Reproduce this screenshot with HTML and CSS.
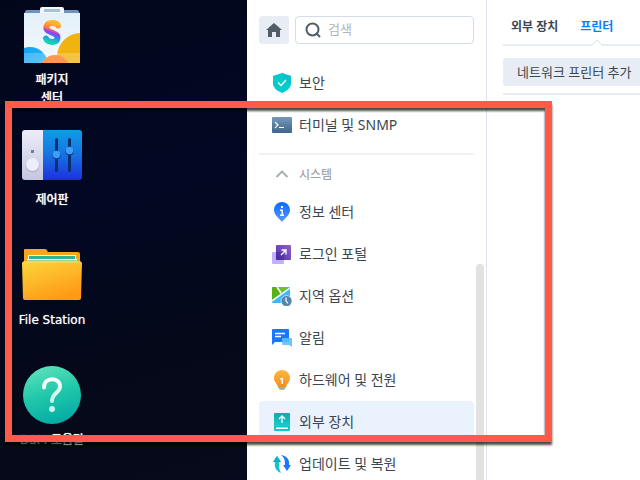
FILE: index.html
```
<!DOCTYPE html>
<html lang="ko">
<head>
  <meta charset="UTF-8">
  <meta name="viewport" content="width=device-width, initial-scale=1.0">
  <title>제어판</title>
  <link rel="stylesheet" href="styles.css">
</head>
<body>
  <div class="screen">
    <nav class="desktop">
      <a class="shortcut" href="#package">
        <svg class="shortcut-icon" viewBox="0 0 60 60">
          <defs>
            <linearGradient id="bag" x1="0" y1="0" x2="0" y2="1"><stop offset="0" stop-color="#e4f0f9"/><stop offset="1" stop-color="#f4f9fd"/></linearGradient>
            <linearGradient id="bagBlue" x1="0" y1="0" x2="1" y2="1"><stop offset="0" stop-color="#0a9df2"/><stop offset="1" stop-color="#3cc0fa"/></linearGradient>
            <linearGradient id="bagS" x1=".6" y1="0" x2=".4" y2="1"><stop offset="0" stop-color="#ffb52e"/><stop offset=".32" stop-color="#ff7a3c"/><stop offset=".5" stop-color="#a03cf0"/><stop offset=".7" stop-color="#2f86f5"/><stop offset="1" stop-color="#12d3b5"/></linearGradient>
            <clipPath id="bagClip"><rect x="2" y="7" width="56" height="51" rx="1"/></clipPath>
          </defs>
          <path d="M4 5h52l2 4H2z" fill="#6e93b8"/>
          <g clip-path="url(#bagClip)">
            <rect x="2" y="8" width="56" height="50" fill="url(#bag)"/>
            <circle cx="8" cy="60" r="18" fill="url(#bagBlue)"/>
            <circle cx="59" cy="52" r="24" fill="#f0b310"/>
            <circle cx="33" cy="65" r="15" fill="#ff7a20"/>
            <rect x="2" y="48" width="56" height="10" fill="#fff" opacity=".22"/>
          </g>
          <path d="M18 8V4q0-2 2-2h20q2 0 2 2v4z" fill="#f3f8fc"/>
          <path d="M22 4h16v3H22z" fill="#a9c0d6"/>
          <path d="M36 20.500C35 18 32.500 18 30 18C23.500 18 22.500 25 27.500 26.500L32 28.500C37.500 30.500 36 37 30.500 37C27 37 25 36 24 33.500" fill="none" stroke="url(#bagS)" stroke-width="6" stroke-linecap="round"/>
        </svg>
        <span class="shortcut-label">패키지<br>센터</span>
      </a>
      <a class="shortcut" href="#control">
        <svg class="shortcut-icon" viewBox="0 0 60 60">
          <defs>
            <linearGradient id="cpLeft" x1="0" y1="0" x2="0" y2="1"><stop offset="0" stop-color="#ececfa"/><stop offset="1" stop-color="#c5c6df"/></linearGradient>
            <linearGradient id="cpRight" x1="0" y1="0" x2="0" y2="1"><stop offset="0" stop-color="#109be8"/><stop offset=".5" stop-color="#1673e0"/><stop offset="1" stop-color="#1d2fe0"/></linearGradient>
          </defs>
          <path d="M3 5h18v50H3q-3 0-3-3V8q0-3 3-3z" fill="url(#cpLeft)"/>
          <path d="M21 5h36q3 0 3 3v44q0 3-3 3H21z" fill="url(#cpRight)"/>
          <rect x="9" y="25" width="3" height="3" fill="#777a9b"/>
          <circle cx="10.500" cy="40.500" r="7" fill="#a4a5c4" opacity=".6"/>
          <circle cx="10.500" cy="39.500" r="6.500" fill="#eeeefa"/>
          <path d="M34.500 14.500v31M47.500 14.500v31" stroke="#08306f" stroke-width="3" stroke-linecap="round"/>
          <circle cx="34.500" cy="30.500" r="4" fill="#0b3d92"/>
          <circle cx="47.500" cy="26.500" r="4" fill="#0b3d92"/>
          <circle cx="34.500" cy="29.500" r="3.700" fill="#3d9dff"/>
          <circle cx="47.500" cy="25.500" r="3.700" fill="#3d9dff"/>
        </svg>
        <span class="shortcut-label">제어판</span>
      </a>
      <a class="shortcut" href="#files">
        <svg class="shortcut-icon" viewBox="0 0 60 60">
          <defs>
            <linearGradient id="folder" x1="0" y1="0" x2=".5" y2="1"><stop offset="0" stop-color="#fdd53a"/><stop offset=".5" stop-color="#fdb929"/><stop offset="1" stop-color="#ff9a17"/></linearGradient>
          </defs>
          <path d="M3 4h20q2 0 3 3h30q2 0 2 2v12H2V5q0-1 1-1z" fill="#f5a51f"/>
          <path d="M6 10h48v9H6z" fill="#e9f7f0"/>
          <path d="M7 11h46v7H7z" fill="#2fb592"/>
          <path d="M5 14h50v5H5z" fill="#9bd69a"/>
          <path d="M5 14h50v1H5z" fill="#f2fbf4"/>
          <path d="M1 17h58q1 0 1 1l-1 35q0 2-2 2H3q-2 0-2-2L0 18q0-1 1-1z" fill="url(#folder)"/>
          <path d="M1 17h58" stroke="#ffe36b"/>
        </svg>
        <span class="shortcut-label">File Station</span>
      </a>
      <a class="shortcut" href="#help">
        <svg class="shortcut-icon" viewBox="0 0 60 60">
          <defs>
            <linearGradient id="help" x1=".2" y1="0" x2=".5" y2="1"><stop offset="0" stop-color="#5ee3bd"/><stop offset=".5" stop-color="#22c8aa"/><stop offset="1" stop-color="#04aca5"/></linearGradient>
            <linearGradient id="helpMark" x1="0" y1="0" x2="0" y2="1"><stop offset="0" stop-color="#fff"/><stop offset="1" stop-color="#c4f2e9"/></linearGradient>
          </defs>
          <circle cx="30" cy="30" r="29" fill="url(#help)"/>
          <path d="M22 22.500C22 11 38 12 38 21.500C38 28 30 27.500 30 36" fill="none" stroke="url(#helpMark)" stroke-width="4" stroke-linecap="round"/>
          <circle cx="30" cy="44" r="3" fill="#c9f4ec"/>
        </svg>
        <span class="shortcut-label">DSM 도움말</span>
      </a>
    </nav>

    <main class="window">
      <aside class="sidebar">
        <div class="search-row">
          <button class="home-btn" type="button" aria-label="홈">
            <svg width="18" height="16" viewBox="0 0 18 16"><path d="M9 1l8 7h-2v7h-4v-5H7v5H3V8H1z" fill="#505d66"/></svg>
          </button>
          <label class="search-box">
            <svg width="16" height="16" viewBox="0 0 16 16" fill="none" stroke="#505d66" stroke-width="2"><circle cx="7.500" cy="7.500" r="6"/><path d="M11 11l4 4"/></svg>
            <input type="text" placeholder="검색" aria-label="검색">
          </label>
        </div>

        <div class="menu">
          <a class="menu-item" href="#security">
            <svg class="menu-icon" viewBox="0 0 20 20"><path d="M10 0L19 3v8q0 5-9 9Q1 16 1 11V3z" fill="#00cdcb"/><path d="M10 0L19 3v8L10 6z" fill="#12b9cd" opacity=".6"/><path d="M6 9.500l3 3 5-5.500" fill="none" stroke="#fff" stroke-width="1.500"/></svg>
            <span class="menu-text">보안</span>
          </a>
          <a class="menu-item" href="#terminal">
            <svg class="menu-icon" viewBox="0 0 20 20"><defs><linearGradient id="term" x1="0" y1="0" x2="0" y2="1"><stop offset="0" stop-color="#7699bd"/><stop offset="1" stop-color="#3f6489"/></linearGradient></defs><rect y="2" width="20" height="16" rx="1" fill="url(#term)"/><path d="M3 7l3 3-3 3M7 12.500h5" fill="none" stroke="#fff" stroke-width="1.200"/></svg>
            <span class="menu-text">터미널 및 SNMP</span>
          </a>
          <button class="menu-group" type="button">
            <svg class="menu-icon" viewBox="0 0 20 20"><path d="M4.500 13L10 7.500l5.500 5.500" fill="none" stroke="#a5aaae" stroke-width="1.800"/></svg>
            <span>시스템</span>
          </button>
          <a class="menu-item" href="#info">
            <svg class="menu-icon" viewBox="0 0 20 20"><defs><linearGradient id="info" x1="0" y1="0" x2="0" y2="1"><stop offset="0" stop-color="#0b6bff"/><stop offset="1" stop-color="#5b96ff"/></linearGradient></defs><path d="M10 0c5 0 8 4 8 8 0 5-5 8-8 12-3-4-8-7-8-12 0-4 3-8 8-8z" fill="url(#info)"/><path d="M9 4h2v2H9zM8 7.500h3v5h1v1.500H8v-1.500h1.500V9H8z" fill="#fff"/></svg>
            <span class="menu-text">정보 센터</span>
          </a>
          <a class="menu-item" href="#portal">
            <svg class="menu-icon" viewBox="0 0 20 20"><defs><linearGradient id="portal" x1="0" y1="1" x2="1" y2="0"><stop offset="0" stop-color="#4a2fa4"/><stop offset="1" stop-color="#9462cf"/></linearGradient></defs><rect y="8" width="12" height="12" rx="1" fill="#c3adff"/><rect x="4" y="1" width="15" height="15" rx="1" fill="url(#portal)"/><path d="M4 8h8v8H4z" fill="#40258f" opacity=".4"/><path d="M9 11l5-5M9.500 6H14v4.500" fill="none" stroke="#fff" stroke-width="1.300"/></svg>
            <span class="menu-text">로그인 포털</span>
          </a>
          <a class="menu-item" href="#region">
            <svg class="menu-icon" viewBox="0 0 20 20"><rect y="1" width="18" height="16" rx="1" fill="#43b5fc"/><path d="M0 2q0-1 1-1h16L0 14z" fill="#6bc51c"/><path d="M0 14L8 7 5 1H1Q0 1 0 2z" fill="#58b215"/><path d="M0 15L18 2M5 1l4 6" stroke="#fff" stroke-width="1.500"/><circle cx="14.500" cy="15" r="5.500" fill="#5284b4" stroke="#fff" stroke-width=".6"/><path d="M14 11.500V15l2 2.500" fill="none" stroke="#fff" stroke-width="1.200"/></svg>
            <span class="menu-text">지역 옵션</span>
          </a>
          <a class="menu-item" href="#notify">
            <svg class="menu-icon" viewBox="0 0 20 20"><path d="M1 1h15q1 0 1 1v12H3l-3 3V2q0-1 1-1z" fill="#1877ff"/><path d="M3 5.500h10M3 8.500h6" stroke="#fff" stroke-width="1.300"/><path d="M11 10h8q1 0 1 1v8l-3-2h-6q-1 0-1-1v-5q0-1 1-1z" fill="#5bc0ff" opacity=".9"/></svg>
            <span class="menu-text">알림</span>
          </a>
          <a class="menu-item" href="#power">
            <svg class="menu-icon" viewBox="0 0 20 20"><defs><linearGradient id="bulb" x1="0" y1="0" x2="0" y2="1"><stop offset="0" stop-color="#ffb83f"/><stop offset="1" stop-color="#f78c20"/></linearGradient></defs><path d="M10 0c5 0 8 4 8 8 0 4-3 5-4 9H6c-1-4-4-5-4-9 0-4 3-8 8-8z" fill="url(#bulb)"/><path d="M6 17h8l-1 2q-3 2-6 0z" fill="#9babb8"/><path d="M8 8.500l2-.8h1V14H9.500V9.500H8z" fill="#fff"/></svg>
            <span class="menu-text">하드웨어 및 전원</span>
          </a>
          <a class="menu-item active" href="#external">
            <svg class="menu-icon" viewBox="0 0 20 20"><defs><linearGradient id="ext" x1="0" y1="0" x2="0" y2="1"><stop offset="0" stop-color="#18a5ac"/><stop offset="1" stop-color="#0fd0cd"/></linearGradient></defs><path d="M3 1h14q1 0 1 1v12H2V2q0-1 1-1z" fill="url(#ext)"/><path d="M2 14h16v4q0 1-1 1H3q-1 0-1-1z" fill="#08c9ca"/><path d="M4 15.500h12v1.500H4z" fill="#fff"/><path d="M10 11V4.500M7 7l3-3 3 3" fill="none" stroke="#fff" stroke-width="1.300"/></svg>
            <span class="menu-text">외부 장치</span>
          </a>
          <a class="menu-item" href="#update">
            <svg class="menu-icon" viewBox="0 0 20 20"><path d="M5 2L1 8h2c-1 5 1 9 6 11-2-4-2-6-2-11h2z" fill="#15c4c4"/><path d="M5 2L1 8h8z" fill="#18aebc"/><path d="M15 17l4-6h-2C18 6 15 2 9 1c4 3 4 6 4 10h-2z" fill="#1b78ff"/></svg>
            <span class="menu-text">업데이트 및 복원</span>
          </a>
        </div>
        <div class="scrollbar"></div>
      </aside>

      <section class="content">
        <div class="tabs">
          <button class="tab" type="button">외부 장치</button>
          <button class="tab selected" type="button">프린터</button>
        </div>
        <div class="toolbar">
          <button class="tool-btn" type="button">네트워크 프린터 추가</button>
        </div>
      </section>
    </main>

    <div class="highlight"></div>
  </div>
</body>
</html>
```
FILE: styles.css
```
* {
  box-sizing: border-box;
}
body {
  margin: 0;
  font-family: "Noto Sans", "Noto Sans CJK KR", sans-serif;
  font-size: 14px;
  color: #3b4650;
}
button, input {
  font: inherit;
  color: inherit;
}
a {
  color: inherit;
  text-decoration: none;
}
.screen {
  position: relative;
  display: flex;
  height: 100vh;
  overflow: hidden;
  background: linear-gradient(165deg, #01061b 0%, #020823 35%, #040819 60%, #070c1e 100%);
}

/* desktop shortcuts */
.desktop {
  flex: 0 0 247px;
  padding: 5px 0 0 7px;
}
.shortcut {
  display: flex;
  flex-direction: column;
  align-items: center;
  gap: 6px;
  width: 90px;
  height: 120px;
}
.shortcut-icon {
  flex: none;
  width: 60px;
  height: 60px;
}
.shortcut-label {
  font-family: "DejaVu Sans", "Noto Sans CJK KR", sans-serif;
  font-size: 12px;
  font-weight: 500;
  line-height: 18px;
  text-align: center;
  color: #fff;
  text-shadow: 0 0 1px rgba(255, 255, 255, 0.7);
}

/* control panel window */
.window {
  flex: 1;
  display: flex;
  min-width: 0;
  background: #fff;
}
.sidebar {
  position: relative;
  flex: 0 0 240px;
  padding: 16px 12px 0;
  border-right: 1px solid #dce3ec;
  overflow: hidden;
}
.search-row {
  display: flex;
  gap: 6px;
  margin-bottom: 18px;
}
.home-btn {
  display: flex;
  align-items: center;
  justify-content: center;
  width: 30px;
  height: 28px;
  padding: 0;
  border: 0;
  border-radius: 3px;
  background: #e8edf5;
}
.search-box {
  flex: 1;
  display: flex;
  align-items: center;
  gap: 7px;
  min-width: 0;
  height: 28px;
  padding: 0 9px;
  border: 1px solid #d3dde9;
  border-radius: 4px;
}
.search-box svg {
  flex: none;
}
.search-box input {
  flex: 1;
  min-width: 0;
  padding: 0 0 2px;
  border: 0;
  outline: 0;
  background: none;
  font-size: 13px;
}
.search-box input::placeholder {
  color: #b1b6ba;
}
.menu-item, .menu-group {
  display: flex;
  align-items: center;
  gap: 7px;
  width: 100%;
  padding: 0 13px;
  white-space: nowrap;
}
.menu-item {
  height: 42px;
  border-radius: 4px;
}
.menu-item.active {
  background: #eaf2fe;
}
.menu-text {
  padding-bottom: 2px;
}
.menu-icon {
  flex: none;
  width: 20px;
  height: 20px;
}
.menu-group {
  height: 38px;
  margin-top: 7px;
  padding-top: 2px;
  border: 0;
  border-top: 2px solid #f0f2f7;
  background: none;
  font-size: 12px;
  font-weight: 500;
  color: #a0a5a9;
}
.scrollbar {
  position: absolute;
  top: 264px;
  right: 2px;
  bottom: 0;
  width: 8px;
  border-radius: 4px 4px 0 0;
  background: #e2e2e2;
}

.content {
  flex: 1;
  min-width: 0;
  padding: 8px 0 0 16px;
  overflow: hidden;
}
.tabs {
  display: flex;
  gap: 6px;
  height: 38px;
  border-bottom: 2px solid #e8edf3;
}
.tab {
  position: relative;
  padding: 0 8px;
  border: 0;
  background: none;
  font-size: 12px;
  font-weight: 700;
  white-space: nowrap;
}
.tab.selected {
  color: #0580f5;
}
/* notch in the tab line */
.tab.selected::after {
  content: "";
  position: absolute;
  left: 50%;
  bottom: -7px;
  width: 9px;
  height: 9px;
  margin-left: -5px;
  border: solid #d5dfea;
  border-width: 1px 0 0 1px;
  background: #fff;
  transform: rotate(45deg);
  clip-path: polygon(0 0, 100% 0, 0 100%);
}
.toolbar {
  padding: 12px 0 7px;
  border-bottom: 2px solid #e8edf3;
}
.tool-btn {
  display: block;
  height: 28px;
  padding: 0 14px;
  border: 0;
  border-radius: 3px;
  background: #e8edf5;
  font-size: 13px;
  line-height: 18px;
  white-space: nowrap;
}

.highlight {
  position: absolute;
  top: 101px;
  left: 5px;
  width: 547px;
  height: 341px;
  border: 7px solid #ff5a4a;
  filter: drop-shadow(0 3px 1px rgba(0, 0, 0, 0.7));
  pointer-events: none;
}
```
